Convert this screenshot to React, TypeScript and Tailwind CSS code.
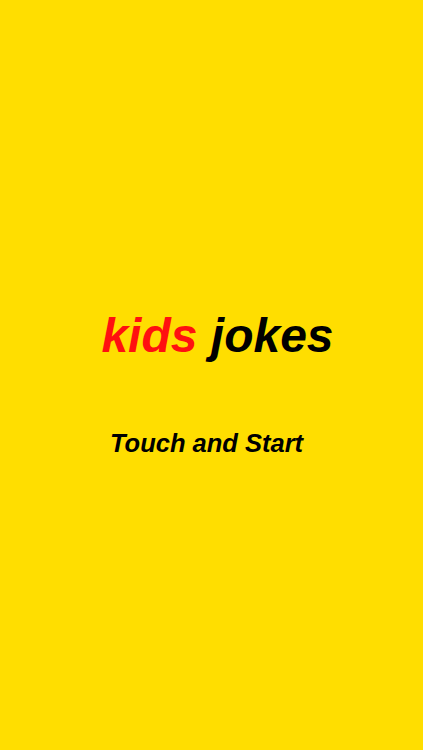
export default function App() {
  return (
    <div className="w-[423px] h-[750px] bg-[#FFDE00] flex flex-col items-center" style={{ fontFamily: '"Liberation Sans", Arial, sans-serif' }}>
      <div className="mt-[304px] pl-[12px] text-[48px] leading-[64px] font-bold italic whitespace-nowrap">
        <span className="text-[#FF1010]">kids</span> <span className="text-black">jokes</span>
      </div>
      <div className="mt-[59px] pr-[10px] text-[25.5px] leading-[32px] font-bold italic text-black whitespace-nowrap">
        Touch and Start
      </div>
    </div>
  );
}
